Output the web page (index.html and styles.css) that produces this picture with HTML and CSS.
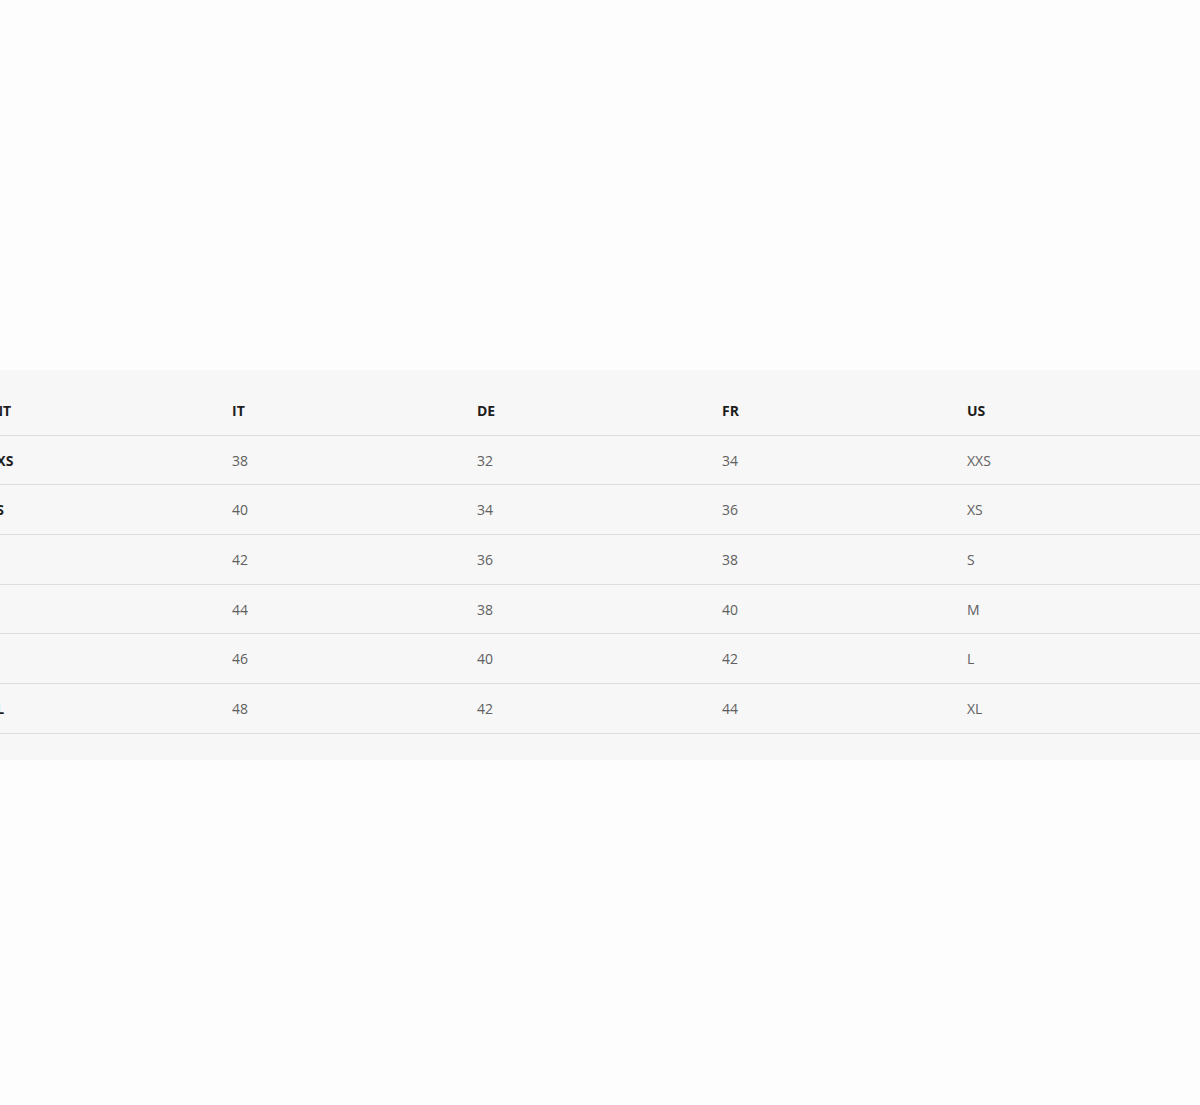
FILE: index.html
```html
<!DOCTYPE html>
<html lang="en">
<head>
<meta charset="utf-8">
<title>Size guide</title>
<link rel="stylesheet" href="styles.css">
</head>
<body>
<main class="page">
  <section class="panel">
    <table class="sizes">
      <thead>
        <tr><th>INT</th><th>IT</th><th>DE</th><th>FR</th><th>US</th></tr>
      </thead>
      <tbody>
        <tr><th>XXS</th><td>38</td><td>32</td><td>34</td><td>XXS</td></tr>
        <tr><th>XS</th><td>40</td><td>34</td><td>36</td><td>XS</td></tr>
        <tr><th>S</th><td>42</td><td>36</td><td>38</td><td>S</td></tr>
        <tr><th>M</th><td>44</td><td>38</td><td>40</td><td>M</td></tr>
        <tr><th>L</th><td>46</td><td>40</td><td>42</td><td>L</td></tr>
        <tr><th>XL</th><td>48</td><td>42</td><td>44</td><td>XL</td></tr>
      </tbody>
    </table>
  </section>
</main>
</body>
</html>
```

FILE: styles.css
```css
html, body {
  margin: 0;
  padding: 0;
  background: #fdfdfd;
  overflow: hidden;
}
body {
  font-family: "Open Sans", "Liberation Sans", sans-serif;
  font-size: 14px;
  color: #555;
}
.page {
  padding-top: 370px;
  height: 735px;
}
.panel {
  background: #f7f7f7;
  padding: 16px 0 26px;
  overflow: hidden;
}
.sizes {
  margin-left: -13px;
  width: 1225px;
  border-collapse: collapse;
  table-layout: fixed;
}
.sizes th,
.sizes td {
  width: 245px;
  text-align: left;
  padding: 15px 0 13px;
  line-height: 20.67px;
  border-bottom: 1px solid #dedede;
  vertical-align: middle;
}
.sizes th {
  font-weight: 700;
  color: #1e1e1e;
}
.sizes td {
  font-weight: 400;
  color: #606060;
}
```
